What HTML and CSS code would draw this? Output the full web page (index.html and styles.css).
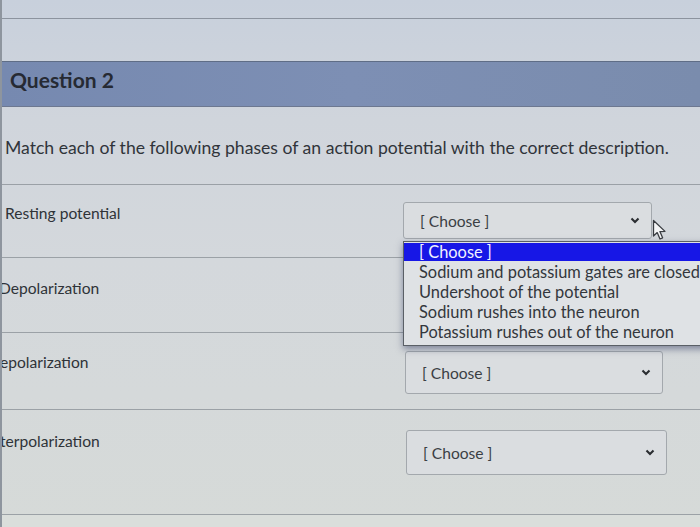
FILE: index.html
```html
<!DOCTYPE html>
<html>
<head>
<meta charset="utf-8">
<link rel="stylesheet" href="styles.css">
</head>
<body>
<div class="page">
  <div class="strip"></div>
  <div class="band"></div>
  <div class="q-header"><span class="q-title">Question 2</span></div>
  <div class="q-text">Match each of the following phases of an action potential with the correct description.</div>
  <div class="row row-1">
    <div class="label">Resting potential</div>
    <div class="select sel-1"><span>[ Choose ]</span><svg class="chev" width="10" height="7" viewBox="0 0 10 7"><path d="M1.5 1.5 L5 5 L8.5 1.5" fill="none" stroke="#2a2d31" stroke-width="2.1"/></svg></div>
  </div>
  <div class="row row-2">
    <div class="label label-d">Depolarization</div>
  </div>
  <div class="row row-3">
    <div class="label label-cut">epolarization</div>
    <div class="select sel-3"><span>[ Choose ]</span><svg class="chev" width="10" height="7" viewBox="0 0 10 7"><path d="M1.5 1.5 L5 5 L8.5 1.5" fill="none" stroke="#2a2d31" stroke-width="2.1"/></svg></div>
  </div>
  <div class="row row-4">
    <div class="label label-cut">terpolarization</div>
    <div class="select sel-4"><span>[ Choose ]</span><svg class="chev" width="10" height="7" viewBox="0 0 10 7"><path d="M1.5 1.5 L5 5 L8.5 1.5" fill="none" stroke="#2a2d31" stroke-width="2.1"/></svg></div>
  </div>
  <div class="foot"></div>

  <ul class="listbox">
    <li class="opt active">[ Choose ]</li>
    <li class="opt">Sodium and potassium gates are closed</li>
    <li class="opt">Undershoot of the potential</li>
    <li class="opt">Sodium rushes into the neuron</li>
    <li class="opt">Potassium rushes out of the neuron</li>
  </ul>

  <svg class="cursor" width="16" height="22" viewBox="0 0 16 22">
    <path d="M1.5 1.5 L1.5 17 L5.2 13.6 L8 20 L10.6 18.8 L7.9 12.6 L13 12.4 Z" fill="#f4f5f6" stroke="#3a3d42" stroke-width="1.3" stroke-linejoin="round"/>
  </svg>
</div>
</body>
</html>
```

FILE: styles.css
```css
html, body {
  margin: 0;
  padding: 0;
}
body {
  width: 700px;
  height: 527px;
  overflow: hidden;
  font-family: Lato, "Open Sans", "Liberation Sans", sans-serif;
  color: #33373c;
  background: #d3d8da;
}
.page {
  position: relative;
  width: 700px;
  height: 527px;
  overflow: hidden;
  background: linear-gradient(180deg, #c8d0dc 0px, #d0d5dc 120px, #d4d8dc 260px, #d6dad8 527px);
  border-left: 2px solid #8e959e;
  box-sizing: border-box;
}
.strip {
  height: 18px;
  border-bottom: 1px solid #8c939e;
}
.band {
  height: 42px;
  border-bottom: 1px solid #5f6d86;
}
.q-header {
  height: 45px;
  background: linear-gradient(90deg, #7689b0, #7d8fb4 50%, #7a8cad);
  border-bottom: 1px solid #6d7890;
  padding: 6px 0 0 8px;
  box-sizing: border-box;
}
.q-title {
  font-weight: 700;
  font-size: 21px;
  line-height: 24px;
  color: #262a33;
}
.q-text {
  height: 78px;
  display: flex;
  align-items: center;
  padding-left: 3px;
  font-size: 17.6px;
  color: #30343a;
  border-bottom: 1px solid #9aa0a6;
  box-sizing: border-box;
  padding-top: 4px;
  white-space: nowrap;
}
.row {
  display: flex;
  justify-content: space-between;
  align-items: flex-start;
  border-bottom: 1px solid #9ba1a6;
  box-sizing: border-box;
}
.row-1 { height: 73px; padding-top: 17px; }
.row-2 { height: 75px; padding-top: 19px; }
.row-3 { height: 77px; padding-top: 18px; }
.row-4 { height: 105px; padding-top: 20px; }
.label {
  font-size: 15.6px;
  line-height: 20px;
  color: #2f3338;
  padding-left: 3px;
  padding-top: 1px;
}
.label-d { margin-left: -6px; }
.label-cut { padding-left: 0; margin-left: -2px; }
.select {
  display: flex;
  align-items: center;
  justify-content: space-between;
  box-sizing: border-box;
  border: 1px solid #a3a8ad;
  border-radius: 3px;
  background: #dadde0;
  padding: 0 11px 0 16px;
  font-size: 15.6px;
  color: #3b3f44;
}
.sel-1 { width: 249px; height: 37px; margin-right: 48px; }
.sel-3 { width: 258px; height: 43px; margin-right: 37px; }
.sel-4 { width: 261px; height: 45px; margin-right: 33px; }
.foot {
  height: 12px;
  background: #dadedb;
}
.listbox {
  position: absolute;
  left: 401px;
  top: 241px;
  width: 310px;
  height: 105px;
  margin: 0;
  padding: 1px 0 0 0;
  list-style: none;
  box-sizing: border-box;
  background: #dfe2e5;
  border: 1px solid #5a5f66;
  box-shadow: 0 3px 7px rgba(40, 50, 90, 0.5);
}
.opt {
  height: 20px;
  line-height: 20px;
  padding-left: 15px;
  font-size: 16.4px;
  color: #33373c;
  white-space: nowrap;
}
.opt.active {
  background: #1717e6;
  color: #f1f2ff;
  height: 18px;
  line-height: 18px;
  margin-bottom: 1px;
}
.cursor {
  position: absolute;
  left: 650px;
  top: 219px;
}
```
